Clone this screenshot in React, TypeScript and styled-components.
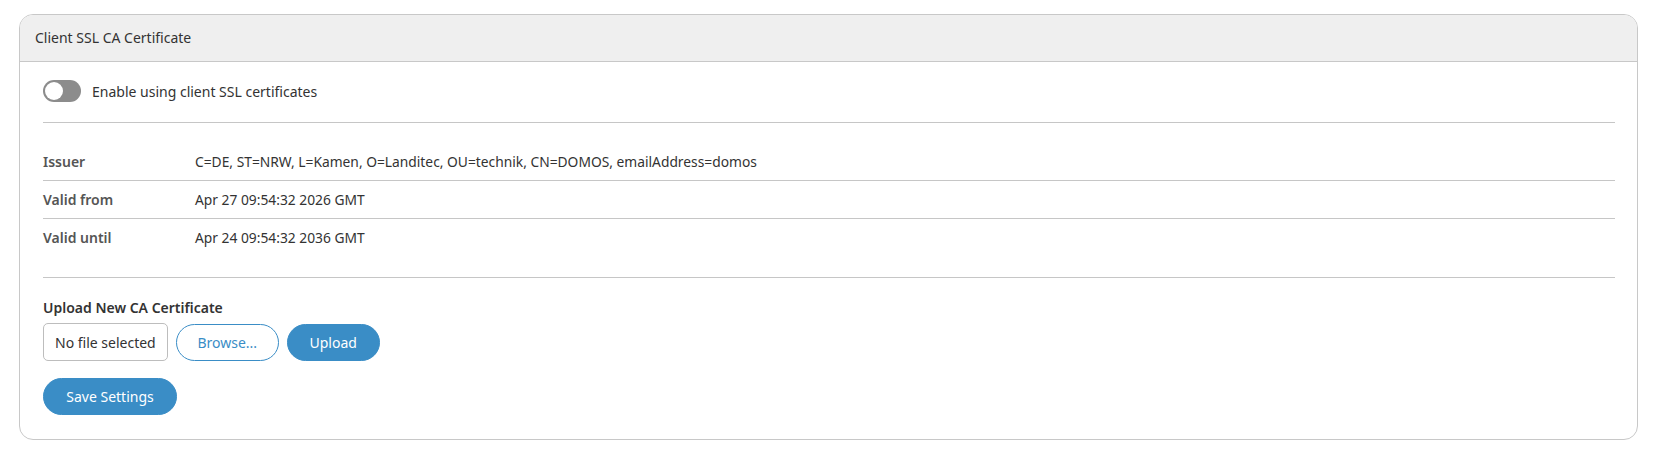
import React, { useState } from 'react';
import styled, { createGlobalStyle } from 'styled-components';

const GlobalStyle = createGlobalStyle`
  body {
    margin: 0;
    background: #ffffff;
    font-family: 'Noto Sans', 'Liberation Sans', sans-serif;
    color: #333333;
  }
`;

const Page = styled.div`
  padding: 14px 19px 16px 19px;
`;

const Card = styled.section`
  border: 1px solid #c8c8c8;
  border-radius: 14px;
  overflow: hidden;
  background: #ffffff;
`;

const CardHeader = styled.header`
  height: 44px;
  display: flex;
  align-items: center;
  padding: 0 15px 2px;
  background: #efefef;
  border-bottom: 1px solid #c8c8c8;
  font-size: 14px;
  color: #333333;
`;

const CardBody = styled.div`
  padding: 18px 22px 24px 23px;
`;

const ToggleRow = styled.label`
  display: flex;
  align-items: center;
  gap: 11px;
  font-size: 14px;
  color: #333333;
  cursor: pointer;
`;

const Track = styled.span<{ $on: boolean }>`
  position: relative;
  width: 38px;
  height: 22px;
  border-radius: 11px;
  background: ${({ $on }) => ($on ? '#3a8dc6' : '#8c8c8c')};
  transition: background 0.2s ease;

  &::after {
    content: '';
    position: absolute;
    top: 2px;
    left: ${({ $on }) => ($on ? '18px' : '2px')};
    width: 18px;
    height: 18px;
    border-radius: 50%;
    background: #ffffff;
    transition: left 0.2s ease;
  }
`;

const Divider = styled.hr<{ $after?: number; $before?: number }>`
  border: none;
  border-top: 1px solid #c6c6c6;
  margin: ${({ $before = 0 }) => $before}px 0 ${({ $after = 0 }) => $after}px;
`;

const InfoTable = styled.div`
  display: grid;
  grid-template-columns: 152px 1fr;
`;

const InfoRow = styled.div`
  display: contents;

  &:not(:last-child) > * {
    border-bottom: 1px solid #c6c6c6;
  }
`;

const InfoLabel = styled.div`
  padding: 9px 0;
  line-height: 19px;
  font-size: 14px;
  font-weight: 600;
  color: #555555;
`;

const InfoValue = styled.div`
  padding: 9px 0;
  line-height: 19px;
  font-size: 13.8px;
  color: #333333;
`;

const SectionLabel = styled.div`
  font-size: 14px;
  font-weight: 600;
  color: #333333;
  line-height: 18px;
  margin-bottom: 6px;
`;

const FileRow = styled.div`
  display: flex;
  align-items: center;
  gap: 8px;
`;

const FileName = styled.div`
  height: 38px;
  box-sizing: border-box;
  padding: 0 11px;
  display: flex;
  align-items: center;
  border: 1px solid #bdbdbd;
  border-radius: 5px;
  font-size: 14px;
  color: #333333;
`;

const Button = styled.button<{ $variant?: 'solid' | 'outline'; $width: number }>`
  height: 37px;
  width: ${({ $width }) => $width}px;
  border-radius: 19px;
  font-family: inherit;
  font-size: 14px;
  cursor: pointer;
  border: 1px solid #3a8dc6;
  background: ${({ $variant }) => ($variant === 'outline' ? '#ffffff' : '#3a8dc6')};
  color: ${({ $variant }) => ($variant === 'outline' ? '#3a8dc6' : '#ffffff')};
`;

const SaveRow = styled.div`
  margin-top: 17px;
`;

const certInfo = [
  { label: 'Issuer', value: 'C=DE, ST=NRW, L=Kamen, O=Landitec, OU=technik, CN=DOMOS, emailAddress=domos' },
  { label: 'Valid from', value: 'Apr 27 09:54:32 2026 GMT' },
  { label: 'Valid until', value: 'Apr 24 09:54:32 2036 GMT' },
];

export default function App() {
  const [enabled, setEnabled] = useState(false);

  return (
    <>
      <GlobalStyle />
      <Page>
        <Card>
          <CardHeader>Client SSL CA Certificate</CardHeader>
          <CardBody>
            <ToggleRow onClick={() => setEnabled(!enabled)}>
              <Track $on={enabled} />
              Enable using client SSL certificates
            </ToggleRow>

            <Divider $before={20} $after={20} />

            <InfoTable>
              {certInfo.map((row) => (
                <InfoRow key={row.label}>
                  <InfoLabel>{row.label}</InfoLabel>
                  <InfoValue>{row.value}</InfoValue>
                </InfoRow>
              ))}
            </InfoTable>

            <Divider $before={21} $after={21} />

            <SectionLabel>Upload New CA Certificate</SectionLabel>
            <FileRow>
              <FileName>No file selected</FileName>
              <Button $variant="outline" $width={103}>Browse...</Button>
              <Button $width={93}>Upload</Button>
            </FileRow>

            <SaveRow>
              <Button $width={134}>Save Settings</Button>
            </SaveRow>
          </CardBody>
        </Card>
      </Page>
    </>
  );
}
